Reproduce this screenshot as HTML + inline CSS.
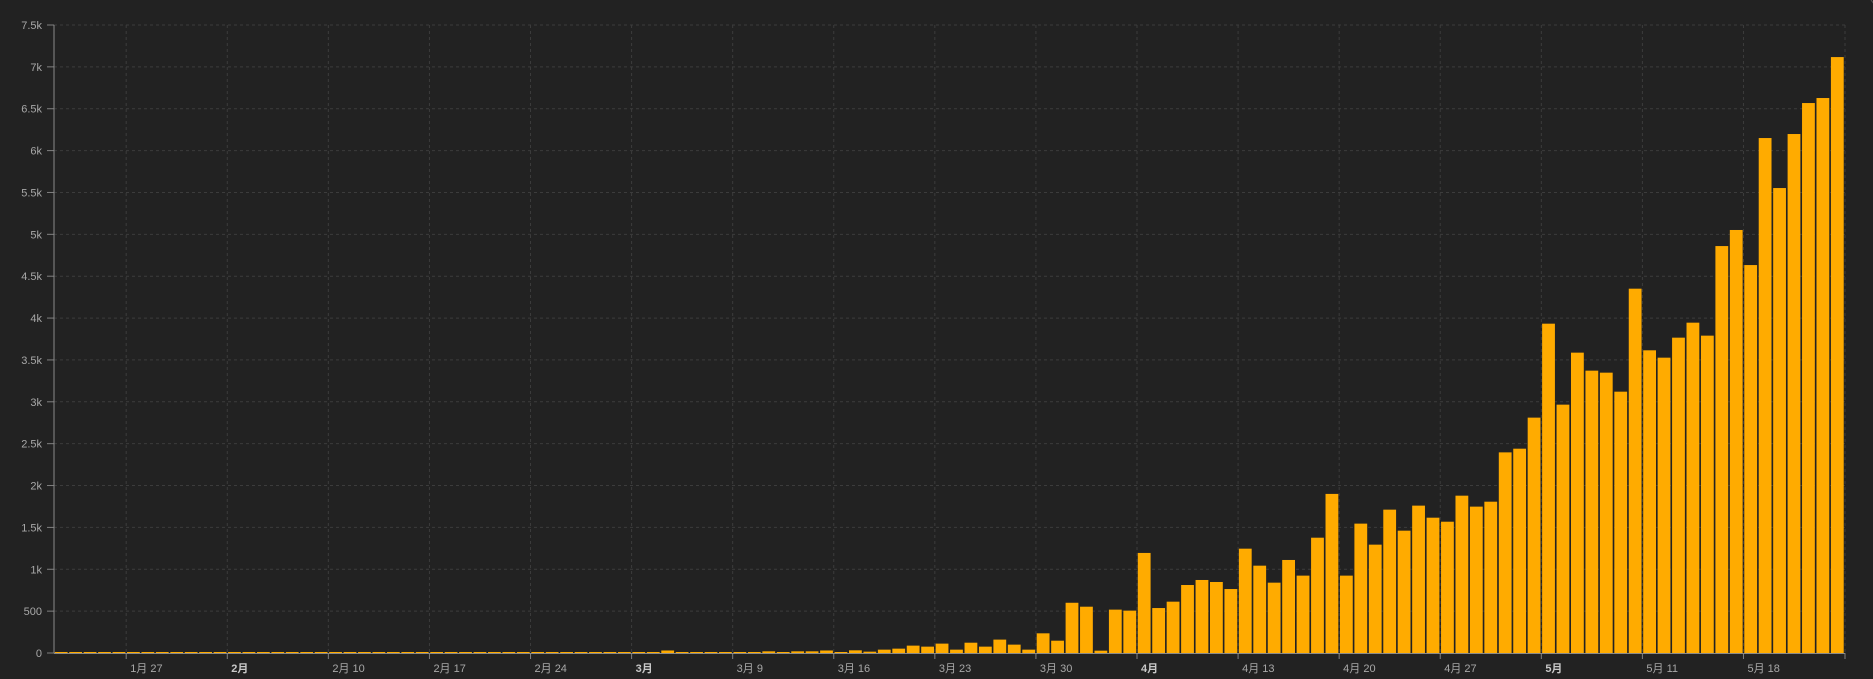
<!DOCTYPE html>
<html><head><meta charset="utf-8">
<style>
html,body{margin:0;padding:0;background:#222222;width:1873px;height:679px;overflow:hidden}
svg{display:block}
text{font-family:"Liberation Sans","Noto Sans CJK SC",sans-serif;font-size:11px;fill:#a8a8a8}
</style></head>
<body>
<svg id="c" width="1873" height="679" xmlns="http://www.w3.org/2000/svg"></svg>
<script>
const vals=[];
for(let i=0;i<39;i++)vals.push(6);
// Mar1..Mar15
[5,5,8,30,5,5,5,8,10,5,20,10,20,20,30].forEach(v=>vals.push(v));
// Mar16..Mar31
[8,32,16,40,52,88,76,112,40,123,76,160,100,40,235,147].forEach(v=>vals.push(v));
// Apr1..Apr30
[600,553,28,518,506,1195,537,613,812,872,848,764,1246,1043,840,1111,924,1377,1900,924,1545,1294,1712,1461,1760,1616,1568,1879,1748,1807].forEach(v=>vals.push(v));
// May1..May24
[2396,2440,2811,3933,2966,3587,3372,3348,3121,4351,3615,3527,3766,3945,3790,4860,5052,4633,6150,5553,6198,6568,6628,7117].forEach(v=>vals.push(v));
const X0=54,W=14.44,Y0=653,YT=25,PK=(Y0-YT)/7500;
let s='';
// horizontal grid + y labels
for(let k=0;k<=15;k++){
  const v=k*500,y=Y0-v*PK;
  if(k>0)s+=`<line x1="${X0}" x2="1845" y1="${y}" y2="${y}" stroke="#3c3c3c" stroke-dasharray="3,3"/>`;
  s+=`<line x1="47" x2="${X0}" y1="${y}" y2="${y}" stroke="#808080"/>`;
  const lab=v===0?'0':(v<1000?String(v):(v/1000)+'k');
  s+=`<text x="42" y="${y+4}" text-anchor="end">${lab}</text>`;
}
// vertical grid + x labels
const ticks=[[5,'1月 27'],[12,'2月',1],[19,'2月 10'],[26,'2月 17'],[33,'2月 24'],[40,'3月',1],[47,'3月 9'],[54,'3月 16'],[61,'3月 23'],[68,'3月 30'],[75,'4月',1],[82,'4月 13'],[89,'4月 20'],[96,'4月 27'],[103,'5月',1],[110,'5月 11'],[117,'5月 18']];
ticks.forEach(t=>{
  const x=X0+t[0]*W;
  s+=`<line x1="${x}" x2="${x}" y1="${YT}" y2="${Y0}" stroke="#3c3c3c" stroke-dasharray="3,3"/>`;
  s+=`<line x1="${x}" x2="${x}" y1="${Y0}" y2="${Y0+6}" stroke="#808080"/>`;
  s+=`<text x="${x+4}" y="672"${t[2]?' font-weight="bold" style="fill:#c8c8c8"':''}>${t[1]}</text>`;
});
s+=`<line x1="1845" x2="1845" y1="${YT}" y2="${Y0}" stroke="#3c3c3c" stroke-dasharray="3,3"/>`;
s+=`<line x1="1845" x2="1845" y1="${Y0}" y2="${Y0+6}" stroke="#808080"/>`;
// bars
vals.forEach((v,i)=>{
  const h=Math.max(1,v*PK),x=X0+i*W+0.8;
  s+=`<rect x="${x.toFixed(2)}" y="${(Y0-h).toFixed(2)}" width="12.8" height="${h.toFixed(2)}" fill="#ffab00"/>`;
});
// axes
s+=`<line x1="${X0}" x2="${X0}" y1="${YT}" y2="${Y0}" stroke="#8a8a8a"/>`;
s+=`<line x1="${X0}" x2="1845" y1="${Y0+0.5}" y2="${Y0+0.5}" stroke="#8a8a8a"/>`;
s+=`<circle cx="1885" cy="-8" r="16" fill="none" stroke="#555"/>`;
document.getElementById('c').innerHTML=s;
</script>
</body></html>
